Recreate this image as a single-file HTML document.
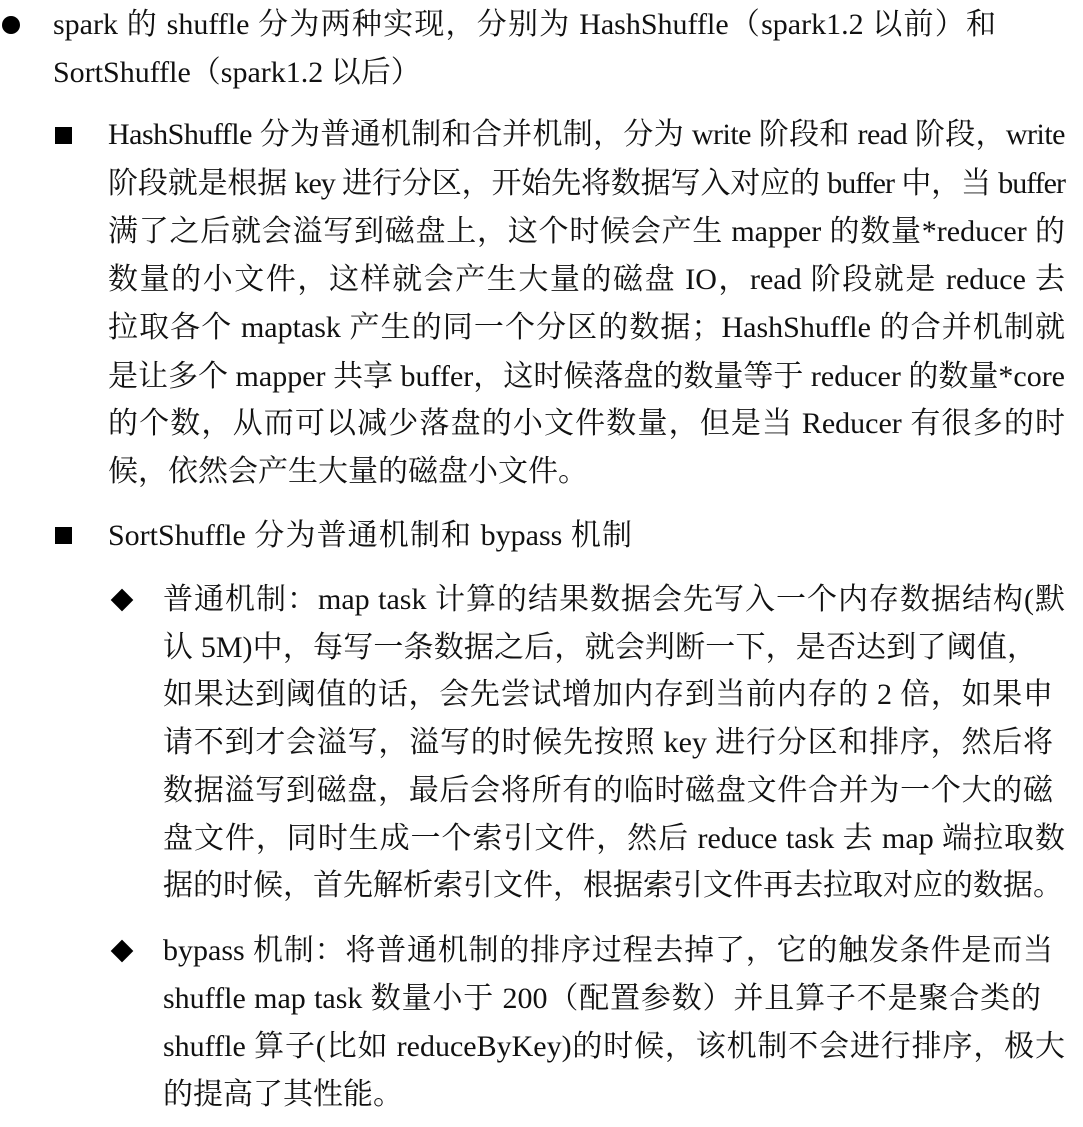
<!DOCTYPE html>
<html><head><meta charset="utf-8"><style>
body{margin:0;width:1083px;height:1127px;background:#fff;position:relative;overflow:hidden;font-family:"Liberation Serif","Noto Serif CJK SC",serif;font-size:30px;color:#111;}
.l{position:absolute;height:48px;line-height:48px;white-space:nowrap;}
.j{text-align:justify;text-align-last:justify;}
.b1{position:absolute;width:18px;height:18px;border-radius:50%;background:#000;}
.b2{position:absolute;width:17px;height:17px;background:#000;}
.b3{position:absolute;width:16px;height:16px;background:#000;transform:rotate(45deg);}
</style></head><body>
<div class="b1" style="left:2px;top:16px"></div>
<div class="l j" style="left:53px;top:1px;width:943px">spark 的 shuffle 分为两种实现，分别为 HashShuffle（spark1.2 以前）和</div>
<div class="l" style="left:53px;top:49px">SortShuffle（spark1.2 以后）</div>

<div class="b2" style="left:55px;top:127px"></div>
<div class="l j" style="left:108px;top:111px;width:957px;letter-spacing:-0.5px">HashShuffle 分为普通机制和合并机制，分为 write 阶段和 read 阶段，write</div>
<div class="l j" style="left:108px;top:160px;width:957px;letter-spacing:-1px">阶段就是根据 key 进行分区，开始先将数据写入对应的 buffer 中，当 buffer</div>
<div class="l j" style="left:108px;top:208px;width:957px">满了之后就会溢写到磁盘上，这个时候会产生 mapper 的数量*reducer 的</div>
<div class="l j" style="left:108px;top:256px;width:957px">数量的小文件，这样就会产生大量的磁盘 IO，read 阶段就是 reduce 去</div>
<div class="l j" style="left:108px;top:304px;width:957px">拉取各个 maptask 产生的同一个分区的数据；HashShuffle 的合并机制就</div>
<div class="l j" style="left:108px;top:353px;width:957px">是让多个 mapper 共享 buffer，这时候落盘的数量等于 reducer 的数量*core</div>
<div class="l j" style="left:108px;top:400px;width:957px">的个数，从而可以减少落盘的小文件数量，但是当 Reducer 有很多的时</div>
<div class="l j" style="left:108px;top:448px;width:478px">候，依然会产生大量的磁盘小文件。</div>

<div class="b2" style="left:55px;top:527px"></div>
<div class="l j" style="left:108px;top:512px;width:524px">SortShuffle 分为普通机制和 bypass 机制</div>

<div class="b3" style="left:114px;top:592px"></div>
<div class="l j" style="left:163px;top:576px;width:902px">普通机制：map task 计算的结果数据会先写入一个内存数据结构(默</div>
<div class="l j" style="left:163px;top:624px;width:874px">认 5M)中，每写一条数据之后，就会判断一下，是否达到了阈值，</div>
<div class="l j" style="left:163px;top:671px;width:890px">如果达到阈值的话，会先尝试增加内存到当前内存的 2 倍，如果申</div>
<div class="l j" style="left:163px;top:719px;width:890px">请不到才会溢写，溢写的时候先按照 key 进行分区和排序，然后将</div>
<div class="l j" style="left:163px;top:767px;width:890px">数据溢写到磁盘，最后会将所有的临时磁盘文件合并为一个大的磁</div>
<div class="l j" style="left:163px;top:815px;width:902px">盘文件，同时生成一个索引文件，然后 reduce task 去 map 端拉取数</div>
<div class="l j" style="left:163px;top:862px;width:892px">据的时候，首先解析索引文件，根据索引文件再去拉取对应的数据。</div>

<div class="b3" style="left:114px;top:943px"></div>
<div class="l j" style="left:163px;top:927px;width:890px">bypass 机制：将普通机制的排序过程去掉了，它的触发条件是而当</div>
<div class="l j" style="left:163px;top:975px;width:878px">shuffle map task 数量小于 200（配置参数）并且算子不是聚合类的</div>
<div class="l j" style="left:163px;top:1023px;width:902px">shuffle 算子(比如 reduceByKey)的时候，该机制不会进行排序，极大</div>
<div class="l j" style="left:163px;top:1071px;width:232px">的提高了其性能。</div>
</body></html>
